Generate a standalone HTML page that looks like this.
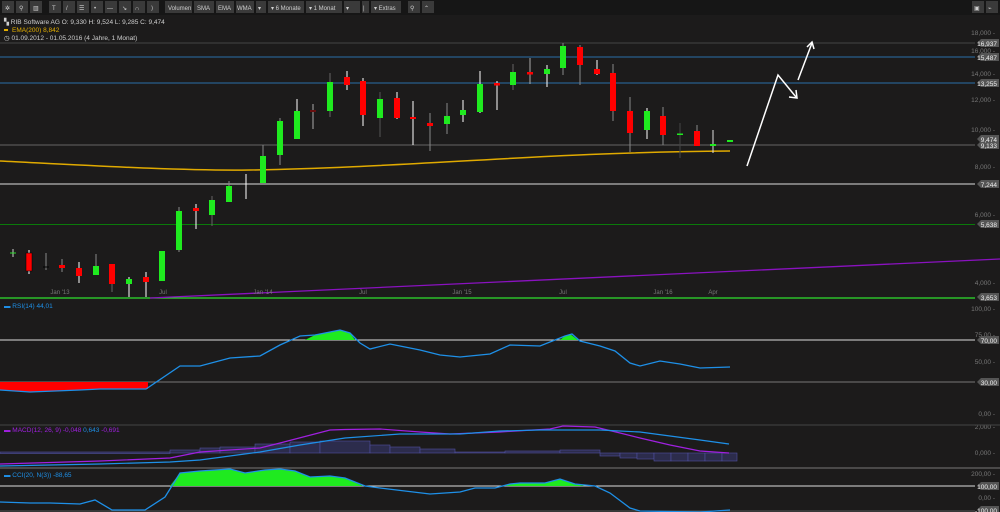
<!DOCTYPE html>
<html><head><meta charset="utf-8"><style>
html,body{margin:0;padding:0;background:#1c1b1b;width:1000px;height:512px;overflow:hidden}
svg{display:block;font-family:"Liberation Sans",sans-serif}
</style></head><body>
<svg width="1000" height="512" viewBox="0 0 1000 512" xmlns="http://www.w3.org/2000/svg">
<rect width="1000" height="512" fill="#1c1b1b"/>
<!-- toolbar -->
<rect width="1000" height="15" fill="#161616"/>
<g fill="#3a3a3a">
<rect x="2" y="1" width="12" height="12"/><rect x="16" y="1" width="12" height="12"/><rect x="30" y="1" width="12" height="12"/>
<rect x="49" y="1" width="12" height="12"/><rect x="63" y="1" width="12" height="12"/><rect x="77" y="1" width="12" height="12"/><rect x="91" y="1" width="12" height="12"/><rect x="105" y="1" width="12" height="12"/><rect x="119" y="1" width="12" height="12"/><rect x="133" y="1" width="12" height="12"/><rect x="147" y="1" width="12" height="12"/>
<rect x="165" y="1" width="27" height="12"/><rect x="194" y="1" width="20" height="12"/><rect x="216" y="1" width="18" height="12"/><rect x="236" y="1" width="18" height="12"/><rect x="256" y="1" width="10" height="12"/>
<rect x="268" y="1" width="36" height="12"/><rect x="306" y="1" width="36" height="12"/><rect x="344" y="1" width="16" height="12"/><rect x="362" y="1" width="7" height="12"/><rect x="371" y="1" width="30" height="12"/>
<rect x="408" y="1" width="12" height="12"/><rect x="422" y="1" width="12" height="12"/>
<rect x="972" y="1" width="12" height="12"/><rect x="986" y="1" width="12" height="12"/>
</g>
<g fill="#cfcfcf" font-size="6">
<text x="5" y="10">✲</text><text x="19" y="10">⚲</text><text x="33" y="10">▥</text>
<text x="52" y="10">T</text><text x="66" y="10">/</text><text x="79" y="10">☰</text><text x="94" y="10">•</text><text x="107" y="10">—</text><text x="122" y="10">↘</text><text x="135" y="10">∩</text><text x="151" y="10">⟩</text>
<text x="168" y="10">Volumen</text><text x="197" y="10">SMA</text><text x="218" y="10">EMA</text><text x="237" y="10">WMA</text><text x="258" y="10">▾</text>
<text x="271" y="10">▾ 6 Monate</text><text x="309" y="10">▾ 1 Monat</text><text x="346" y="10">▾</text><text x="363" y="10">|</text><text x="374" y="10">▾ Extras</text>
<text x="410" y="10">⚲</text><text x="424" y="10">⌃</text><text x="974" y="10">▣</text><text x="988" y="10">⌁</text>
</g>
<!-- legend -->
<g font-size="6.5">
<text x="4" y="24" fill="#cfcfcf">▚ RIB Software AG  O: 9,330  H: 9,524  L: 9,285  C: 9,474</text>
<rect x="4" y="29" width="4" height="2" fill="#e5b000"/>
<text x="12" y="32" fill="#e5b000">EMA(200) 8,842</text>
<text x="4" y="40" fill="#cfcfcf">◷ 01.09.2012 - 01.05.2016 (4 Jahre, 1 Monat)</text>
</g>
<!-- main horizontal lines -->
<line x1="0" y1="43" x2="975" y2="43" stroke="#444" stroke-width="1"/>
<line x1="0" y1="57" x2="975" y2="57" stroke="#2a6fa8" stroke-width="1"/>
<line x1="0" y1="83" x2="975" y2="83" stroke="#2a6fa8" stroke-width="1"/>
<line x1="0" y1="145" x2="975" y2="145" stroke="#666" stroke-width="1"/>
<line x1="0" y1="184" x2="975" y2="184" stroke="#ddd" stroke-width="1"/>
<line x1="0" y1="224.5" x2="975" y2="224.5" stroke="#0a7a0a" stroke-width="1"/>
<line x1="0" y1="298" x2="975" y2="298" stroke="#2ee02e" stroke-width="1.2"/>
<line x1="150" y1="298" x2="1000" y2="259" stroke="#8a12c0" stroke-width="1.3"/>
<path d="M0,161 C80,165 180,171 250,170 C400,168 550,152 730,151" fill="none" stroke="#e0aa00" stroke-width="1.5"/>
<!-- x labels -->
<g font-size="6" fill="#777" text-anchor="middle">
<text x="60" y="294">Jan '13</text><text x="163" y="294">Jul</text><text x="263" y="294">Jan '14</text><text x="363" y="294">Jul</text><text x="462" y="294">Jan '15</text><text x="563" y="294">Jul</text><text x="663" y="294">Jan '16</text><text x="713" y="294">Apr</text>
</g>
<!-- candles -->
<g stroke-width="1">
<line x1="13" y1="249" x2="13" y2="257" stroke="#ccc"/><line x1="10" y1="253" x2="16" y2="253" stroke="#2ee02e"/>
<line x1="29" y1="250" x2="29" y2="274" stroke="#fff"/><rect x="26" y="253" width="6" height="18" fill="#f00" stroke="#000" stroke-width=".5"/>
<line x1="46" y1="253" x2="46" y2="270" stroke="#888"/><line x1="43" y1="267" x2="49" y2="267" stroke="#000"/>
<line x1="62" y1="259" x2="62" y2="272" stroke="#888"/><rect x="59" y="265" width="6" height="3" fill="#f00"/>
<line x1="79" y1="262" x2="79" y2="283" stroke="#fff"/><rect x="76" y="268" width="6" height="8" fill="#f00"/>
<line x1="96" y1="254" x2="96" y2="275" stroke="#888"/><rect x="93" y="266" width="6" height="9" fill="#1fea1f"/>
<line x1="112" y1="264" x2="112" y2="292" stroke="#666"/><rect x="109" y="264" width="6" height="20" fill="#f00"/>
<line x1="129" y1="277" x2="129" y2="297" stroke="#fff"/><rect x="126" y="279" width="6" height="5" fill="#1fea1f"/>
<line x1="146" y1="272" x2="146" y2="297" stroke="#fff"/><rect x="143" y="277" width="6" height="5" fill="#f00"/>
<rect x="159" y="251" width="6" height="30" fill="#1fea1f"/>
<line x1="179" y1="207" x2="179" y2="252" stroke="#888"/><rect x="176" y="211" width="6" height="39" fill="#1fea1f"/>
<line x1="196" y1="204" x2="196" y2="229" stroke="#fff"/><rect x="193" y="208" width="6" height="3" fill="#f00"/>
<line x1="212" y1="196" x2="212" y2="226" stroke="#666"/><rect x="209" y="200" width="6" height="15" fill="#1fea1f"/>
<line x1="229" y1="181" x2="229" y2="202" stroke="#888"/><rect x="226" y="186" width="6" height="16" fill="#1fea1f"/>
<line x1="246" y1="174" x2="246" y2="199" stroke="#fff"/>
<line x1="263" y1="145" x2="263" y2="183" stroke="#888"/><rect x="260" y="156" width="6" height="27" fill="#1fea1f"/>
<line x1="280" y1="118" x2="280" y2="165" stroke="#888"/><rect x="277" y="121" width="6" height="34" fill="#1fea1f"/>
<line x1="297" y1="99" x2="297" y2="139" stroke="#fff"/><rect x="294" y="111" width="6" height="28" fill="#1fea1f"/>
<line x1="313" y1="104" x2="313" y2="129" stroke="#aaa"/><rect x="310" y="110" width="6" height="2" fill="#6a1010"/>
<line x1="330" y1="73" x2="330" y2="117" stroke="#666"/><rect x="327" y="82" width="6" height="29" fill="#1fea1f"/>
<line x1="347" y1="71" x2="347" y2="90" stroke="#fff"/><rect x="344" y="77" width="6" height="8" fill="#f00"/>
<line x1="363" y1="78" x2="363" y2="126" stroke="#fff"/><rect x="360" y="81" width="6" height="34" fill="#f00"/>
<line x1="380" y1="92" x2="380" y2="137" stroke="#555"/><rect x="377" y="99" width="6" height="19" fill="#1fea1f"/>
<line x1="397" y1="92" x2="397" y2="119" stroke="#fff"/><rect x="394" y="98" width="6" height="20" fill="#f00"/>
<line x1="413" y1="101" x2="413" y2="145" stroke="#fff"/><rect x="410" y="117" width="6" height="2" fill="#f00"/>
<line x1="430" y1="113" x2="430" y2="151" stroke="#888"/><rect x="427" y="123" width="6" height="3" fill="#f00"/>
<line x1="447" y1="103" x2="447" y2="134" stroke="#888"/><rect x="444" y="116" width="6" height="8" fill="#1fea1f"/>
<line x1="463" y1="100" x2="463" y2="122" stroke="#fff"/><rect x="460" y="110" width="6" height="5" fill="#1fea1f"/>
<line x1="480" y1="71" x2="480" y2="113" stroke="#fff"/><rect x="477" y="84" width="6" height="28" fill="#1fea1f"/>
<line x1="497" y1="81" x2="497" y2="110" stroke="#fff"/><rect x="494" y="83" width="6" height="2.5" fill="#f00"/>
<line x1="513" y1="64" x2="513" y2="90" stroke="#666"/><rect x="510" y="72" width="6" height="13" fill="#1fea1f"/>
<line x1="530" y1="58" x2="530" y2="84" stroke="#aaa"/><rect x="527" y="72" width="6" height="2.5" fill="#f00"/>
<line x1="547" y1="65" x2="547" y2="87" stroke="#fff"/><rect x="544" y="69" width="6" height="5" fill="#1fea1f"/>
<line x1="563" y1="43" x2="563" y2="75" stroke="#888"/><rect x="560" y="46" width="6" height="22" fill="#1fea1f"/>
<line x1="580" y1="45" x2="580" y2="85" stroke="#888"/><rect x="577" y="47" width="6" height="18" fill="#f00"/>
<line x1="597" y1="60" x2="597" y2="75" stroke="#fff"/><rect x="594" y="69" width="6" height="5" fill="#f00"/>
<line x1="613" y1="64" x2="613" y2="121" stroke="#888"/><rect x="610" y="73" width="6" height="38" fill="#f00"/>
<line x1="630" y1="97" x2="630" y2="152" stroke="#888"/><rect x="627" y="111" width="6" height="22" fill="#f00"/>
<line x1="647" y1="108" x2="647" y2="139" stroke="#fff"/><rect x="644" y="111" width="6" height="19" fill="#1fea1f"/>
<line x1="663" y1="107" x2="663" y2="145" stroke="#888"/><rect x="660" y="116" width="6" height="19" fill="#f00"/>
<line x1="680" y1="123" x2="680" y2="158" stroke="#444"/><rect x="677" y="133.5" width="6" height="1.5" fill="#1fea1f"/>
<line x1="697" y1="125" x2="697" y2="146" stroke="#888"/><rect x="694" y="131" width="6" height="15" fill="#f00"/>
<line x1="713" y1="130" x2="713" y2="153" stroke="#ddd"/><rect x="710" y="144" width="6" height="2" fill="#1fea1f"/>
<rect x="727" y="140" width="6" height="2" fill="#1fea1f"/>
</g>
<!-- arrows -->
<g stroke="#fff" stroke-width="1.5" fill="none">
<polyline points="747,166 778,75 796,97"/>
<polyline points="789,97 797,98 796,90"/>
<line x1="798" y1="80" x2="812" y2="43"/>
<polyline points="807,47 812,42 814,49"/>
</g>
<!-- right axis -->
<g font-size="6.5" fill="#777" text-anchor="end">
<text x="995" y="35">18,000 -</text><text x="995" y="53">16,000 -</text><text x="995" y="76">14,000 -</text><text x="995" y="102">12,000 -</text><text x="995" y="132">10,000 -</text><text x="995" y="169">8,000 -</text><text x="995" y="217">6,000 -</text><text x="995" y="285">4,000 -</text>
<text x="995" y="311">100,00 -</text><text x="995" y="337">75,00 -</text><text x="995" y="364">50,00 -</text><text x="995" y="416">0,00 -</text>
<text x="995" y="429">2,000 -</text><text x="995" y="455">0,000 -</text>
<text x="995" y="476">200,00 -</text><text x="995" y="500">0,00 -</text>
</g>
<g font-size="6.5" fill="#eee" text-anchor="end">
<g fill="#555"><path d="M977,43 l4,-4 h18 v8 h-18z"/><path d="M977,57 l4,-4 h18 v8 h-18z"/><path d="M977,83 l4,-4 h18 v8 h-18z"/><path d="M977,139 l4,-4 h18 v8 h-18z"/><path d="M977,145 l4,-4 h18 v8 h-18z"/><path d="M977,184 l4,-4 h18 v8 h-18z"/><path d="M977,224 l4,-4 h18 v8 h-18z"/><path d="M977,297 l4,-4 h18 v8 h-18z"/><path d="M977,340 l4,-4 h18 v8 h-18z"/><path d="M977,382 l4,-4 h18 v8 h-18z"/><path d="M977,486 l4,-4 h18 v8 h-18z"/><path d="M977,510 l4,-4 h18 v8 h-18z"/></g>
<text x="997" y="46">16,937</text><text x="997" y="60">15,487</text><text x="997" y="86">13,255</text><text x="997" y="142">9,474</text><text x="997" y="148">9,133</text><text x="997" y="187">7,244</text><text x="997" y="227">5,638</text><text x="997" y="300">3,653</text><text x="997" y="343">70,00</text><text x="997" y="385">30,00</text><text x="997" y="489">100,00</text><text x="997" y="513">-100,00</text>
</g>
<!-- RSI panel -->
<line x1="0" y1="340" x2="975" y2="340" stroke="#ddd"/>
<line x1="0" y1="382" x2="975" y2="382" stroke="#777"/>
<polygon points="0,382 148,382 148,389 100,389 80,390 30,392 0,390" fill="#f00"/>
<polygon points="305,340 315,335 330,332 340,330 350,333 355,340" fill="#1fea1f"/>
<polygon points="560,340 565,336 570,334 578,340" fill="#1fea1f"/>
<polyline points="0,390 30,392 80,390 100,389 146,389 180,366 200,366 230,358 260,356 280,345 300,336 315,335 330,332 340,330 350,333 360,343 370,349 390,344 420,350 440,355 460,357 490,354 510,345 540,346 565,336 572,334 580,341 600,346 615,351 630,363 640,366 660,361 680,364 700,368 730,367" fill="none" stroke="#1e90e8" stroke-width="1.3"/>
<text x="4" y="308" font-size="6.5" fill="#1e90e8">▬ RSI(14) 44,01</text>
<line x1="0" y1="425" x2="1000" y2="425" stroke="#444"/>
<!-- MACD -->
<g fill="#2c2c4c" stroke="#5050a0" stroke-width=".6">
<rect x="0" y="452" width="170" height="1.5"/><rect x="170" y="450" width="30" height="3"/>
<rect x="200" y="448" width="20" height="5"/><rect x="220" y="447" width="35" height="6"/><rect x="255" y="444" width="35" height="9"/><rect x="290" y="442" width="30" height="11"/><rect x="320" y="441" width="50" height="12"/><rect x="370" y="445" width="20" height="8"/><rect x="390" y="447" width="30" height="6"/><rect x="420" y="449" width="35" height="4"/><rect x="455" y="452" width="50" height="1"/><rect x="505" y="451" width="55" height="2"/><rect x="560" y="450" width="40" height="3"/>
<rect x="600" y="453" width="20" height="3"/><rect x="620" y="453" width="17" height="5"/><rect x="637" y="453" width="17" height="6"/><rect x="654" y="453" width="17" height="8"/><rect x="671" y="453" width="17" height="8"/><rect x="688" y="453" width="17" height="8"/><rect x="705" y="453" width="17" height="8"/><rect x="722" y="453" width="15" height="8"/>
</g>
<polyline points="0,464 100,461 170,458 200,452 260,448 280,443 330,430 345,429.5 380,429 420,432 450,434 500,432 550,429 563,426 595,427 620,433 640,438 670,445 700,451 729,453" fill="none" stroke="#a020e0" stroke-width="1.2"/>
<polyline points="0,466 100,464 170,462 200,460 260,452 300,445 345,438 400,434 460,434 500,431 540,430 600,430 640,432 670,436 700,440 729,444" fill="none" stroke="#1e90e8" stroke-width="1.2"/>
<text x="4" y="432" font-size="6.5" fill="#a020e0">▬ MACD(12, 26, 9) -0,048  <tspan fill="#1e90e8">0,643</tspan>  -0,691</text>
<line x1="0" y1="468" x2="1000" y2="468" stroke="#777"/>
<!-- CCI -->
<line x1="0" y1="486" x2="975" y2="486" stroke="#ddd"/>
<line x1="0" y1="511" x2="975" y2="511" stroke="#555"/>
<polygon points="170,486 180,473 200,471 230,469 245,473 265,470 280,469 295,471 310,477 330,476 345,478 363,486" fill="#1fea1f"/>
<polygon points="505,486 510,484 520,483 545,483 560,479 575,484 585,486" fill="#1fea1f"/>
<polyline points="0,502 30,503 50,503 80,504 95,500 112,510 145,510 165,497 180,473 200,471 230,469 245,473 265,470 280,469 295,471 310,477 330,476 345,478 365,486 380,488 430,494 460,492 475,488 495,488 510,484 520,483 545,483 560,479 575,484 595,486 610,493 630,508 640,511 700,512 730,510" fill="none" stroke="#1e90e8" stroke-width="1.3"/>
<text x="4" y="477" font-size="6.5" fill="#1e90e8">▬ CCI(20, N(3)) -88,65</text>
</svg>
</body></html>
